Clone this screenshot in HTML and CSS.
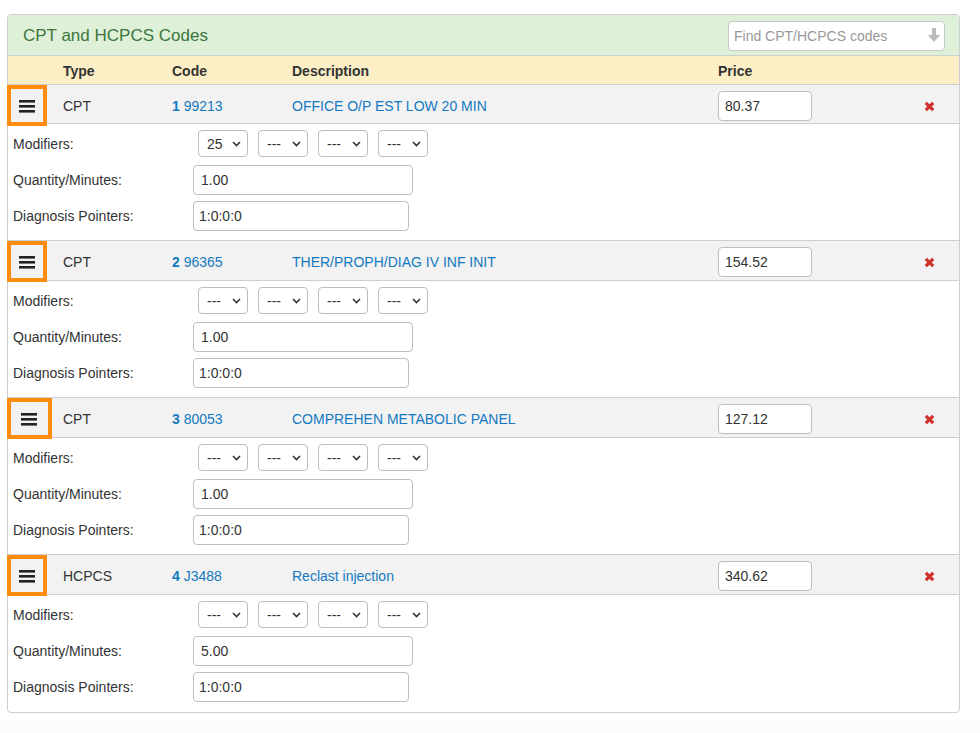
FILE: index.html
```html
<!DOCTYPE html>
<html lang="en">
<head>
<meta charset="utf-8">
<title>CPT and HCPCS Codes</title>
<link rel="stylesheet" href="styles.css">
</head>
<body>
<div class="panel">
  <div class="panel-head">
    <h3 class="panel-title">CPT and HCPCS Codes</h3>
    <div class="search">
      <input class="search-input" type="text" placeholder="Find CPT/HCPCS codes">
      <svg class="search-icon" width="12" height="15" viewBox="0 0 12 15"><rect x="4" y="0" width="4" height="8" fill="#bbb"/><polygon points="0,7 12,7 6,14" fill="#bbb"/></svg>
    </div>
  </div>
  <div class="grid cols">
    <span></span><span>Type</span><span>Code</span><span>Description</span><span>Price</span><span></span>
  </div>

  <div class="item">
    <div class="grid band">
      <div class="handle"><svg width="16" height="14" viewBox="0 0 16 14"><rect x="0" y="1" width="16" height="2.6" fill="#222"/><rect x="0" y="6" width="16" height="2.6" fill="#222"/><rect x="0" y="11" width="16" height="2.6" fill="#222"/></svg></div>
      <span>CPT</span>
      <a class="link" href="#"><b>1</b> 99213</a>
      <a class="link" href="#">OFFICE O/P EST LOW 20 MIN</a>
      <div><input class="price" type="text" value="80.37"></div>
      <div class="del"><svg width="11" height="11" viewBox="0 0 11 11"><path d="M1.8 1.8L9.2 9.2M9.2 1.8L1.8 9.2" stroke="#d0312d" stroke-width="3.2"/></svg></div>
    </div>
    <div class="details">
      <div class="field mods"><label>Modifiers:</label>
        <div class="selects">
          <span class="sel"><select><option>25</option></select><svg class="chev" width="9" height="6" viewBox="0 0 9 6"><path d="M1 1L4.5 4.5L8 1" fill="none" stroke="#333" stroke-width="1.6"/></svg></span>
          <span class="sel"><select><option>---</option></select><svg class="chev" width="9" height="6" viewBox="0 0 9 6"><path d="M1 1L4.5 4.5L8 1" fill="none" stroke="#333" stroke-width="1.6"/></svg></span>
          <span class="sel"><select><option>---</option></select><svg class="chev" width="9" height="6" viewBox="0 0 9 6"><path d="M1 1L4.5 4.5L8 1" fill="none" stroke="#333" stroke-width="1.6"/></svg></span>
          <span class="sel"><select><option>---</option></select><svg class="chev" width="9" height="6" viewBox="0 0 9 6"><path d="M1 1L4.5 4.5L8 1" fill="none" stroke="#333" stroke-width="1.6"/></svg></span>
        </div>
      </div>
      <div class="field qty"><label>Quantity/Minutes:</label><input class="qty-input" type="text" value="1.00"></div>
      <div class="field"><label>Diagnosis Pointers:</label><input class="diag-input" type="text" value="1:0:0:0"></div>
    </div>
  </div>

  <div class="item">
    <div class="grid band">
      <div class="handle"><svg width="16" height="14" viewBox="0 0 16 14"><rect x="0" y="1" width="16" height="2.6" fill="#222"/><rect x="0" y="6" width="16" height="2.6" fill="#222"/><rect x="0" y="11" width="16" height="2.6" fill="#222"/></svg></div>
      <span>CPT</span>
      <a class="link" href="#"><b>2</b> 96365</a>
      <a class="link" href="#">THER/PROPH/DIAG IV INF INIT</a>
      <div><input class="price" type="text" value="154.52"></div>
      <div class="del"><svg width="11" height="11" viewBox="0 0 11 11"><path d="M1.8 1.8L9.2 9.2M9.2 1.8L1.8 9.2" stroke="#d0312d" stroke-width="3.2"/></svg></div>
    </div>
    <div class="details">
      <div class="field mods"><label>Modifiers:</label>
        <div class="selects">
          <span class="sel"><select><option>---</option></select><svg class="chev" width="9" height="6" viewBox="0 0 9 6"><path d="M1 1L4.5 4.5L8 1" fill="none" stroke="#333" stroke-width="1.6"/></svg></span>
          <span class="sel"><select><option>---</option></select><svg class="chev" width="9" height="6" viewBox="0 0 9 6"><path d="M1 1L4.5 4.5L8 1" fill="none" stroke="#333" stroke-width="1.6"/></svg></span>
          <span class="sel"><select><option>---</option></select><svg class="chev" width="9" height="6" viewBox="0 0 9 6"><path d="M1 1L4.5 4.5L8 1" fill="none" stroke="#333" stroke-width="1.6"/></svg></span>
          <span class="sel"><select><option>---</option></select><svg class="chev" width="9" height="6" viewBox="0 0 9 6"><path d="M1 1L4.5 4.5L8 1" fill="none" stroke="#333" stroke-width="1.6"/></svg></span>
        </div>
      </div>
      <div class="field qty"><label>Quantity/Minutes:</label><input class="qty-input" type="text" value="1.00"></div>
      <div class="field"><label>Diagnosis Pointers:</label><input class="diag-input" type="text" value="1:0:0:0"></div>
    </div>
  </div>

  <div class="item">
    <div class="grid band">
      <div class="handle handle-wide"><svg width="16" height="14" viewBox="0 0 16 14"><rect x="0" y="1" width="16" height="2.6" fill="#222"/><rect x="0" y="6" width="16" height="2.6" fill="#222"/><rect x="0" y="11" width="16" height="2.6" fill="#222"/></svg></div>
      <span>CPT</span>
      <a class="link" href="#"><b>3</b> 80053</a>
      <a class="link" href="#">COMPREHEN METABOLIC PANEL</a>
      <div><input class="price" type="text" value="127.12"></div>
      <div class="del"><svg width="11" height="11" viewBox="0 0 11 11"><path d="M1.8 1.8L9.2 9.2M9.2 1.8L1.8 9.2" stroke="#d0312d" stroke-width="3.2"/></svg></div>
    </div>
    <div class="details">
      <div class="field mods"><label>Modifiers:</label>
        <div class="selects">
          <span class="sel"><select><option>---</option></select><svg class="chev" width="9" height="6" viewBox="0 0 9 6"><path d="M1 1L4.5 4.5L8 1" fill="none" stroke="#333" stroke-width="1.6"/></svg></span>
          <span class="sel"><select><option>---</option></select><svg class="chev" width="9" height="6" viewBox="0 0 9 6"><path d="M1 1L4.5 4.5L8 1" fill="none" stroke="#333" stroke-width="1.6"/></svg></span>
          <span class="sel"><select><option>---</option></select><svg class="chev" width="9" height="6" viewBox="0 0 9 6"><path d="M1 1L4.5 4.5L8 1" fill="none" stroke="#333" stroke-width="1.6"/></svg></span>
          <span class="sel"><select><option>---</option></select><svg class="chev" width="9" height="6" viewBox="0 0 9 6"><path d="M1 1L4.5 4.5L8 1" fill="none" stroke="#333" stroke-width="1.6"/></svg></span>
        </div>
      </div>
      <div class="field qty"><label>Quantity/Minutes:</label><input class="qty-input" type="text" value="1.00"></div>
      <div class="field"><label>Diagnosis Pointers:</label><input class="diag-input" type="text" value="1:0:0:0"></div>
    </div>
  </div>

  <div class="item">
    <div class="grid band">
      <div class="handle"><svg width="16" height="14" viewBox="0 0 16 14"><rect x="0" y="1" width="16" height="2.6" fill="#222"/><rect x="0" y="6" width="16" height="2.6" fill="#222"/><rect x="0" y="11" width="16" height="2.6" fill="#222"/></svg></div>
      <span>HCPCS</span>
      <a class="link" href="#"><b>4</b> J3488</a>
      <a class="link" href="#">Reclast injection</a>
      <div><input class="price" type="text" value="340.62"></div>
      <div class="del"><svg width="11" height="11" viewBox="0 0 11 11"><path d="M1.8 1.8L9.2 9.2M9.2 1.8L1.8 9.2" stroke="#d0312d" stroke-width="3.2"/></svg></div>
    </div>
    <div class="details">
      <div class="field mods"><label>Modifiers:</label>
        <div class="selects">
          <span class="sel"><select><option>---</option></select><svg class="chev" width="9" height="6" viewBox="0 0 9 6"><path d="M1 1L4.5 4.5L8 1" fill="none" stroke="#333" stroke-width="1.6"/></svg></span>
          <span class="sel"><select><option>---</option></select><svg class="chev" width="9" height="6" viewBox="0 0 9 6"><path d="M1 1L4.5 4.5L8 1" fill="none" stroke="#333" stroke-width="1.6"/></svg></span>
          <span class="sel"><select><option>---</option></select><svg class="chev" width="9" height="6" viewBox="0 0 9 6"><path d="M1 1L4.5 4.5L8 1" fill="none" stroke="#333" stroke-width="1.6"/></svg></span>
          <span class="sel"><select><option>---</option></select><svg class="chev" width="9" height="6" viewBox="0 0 9 6"><path d="M1 1L4.5 4.5L8 1" fill="none" stroke="#333" stroke-width="1.6"/></svg></span>
        </div>
      </div>
      <div class="field qty"><label>Quantity/Minutes:</label><input class="qty-input" type="text" value="5.00"></div>
      <div class="field"><label>Diagnosis Pointers:</label><input class="diag-input" type="text" value="1:0:0:0"></div>
    </div>
  </div>
</div>
<div class="page-foot"></div>
</body>
</html>
```

FILE: styles.css
```css
* { box-sizing: border-box; }
html, body { margin: 0; padding: 0; background: #fff; }
body {
  padding-top: 14px;
  font-family: "Liberation Sans", Arial, sans-serif;
  font-size: 14px;
  color: #333;
}
.panel {
  width: 953px;
  margin-left: 7px;
  padding-bottom: 1px;
  border: 1px solid #cfcfcf;
  border-radius: 4px;
  background: #fff;
}
.panel-head {
  height: 41px;
  display: flex;
  align-items: center;
  justify-content: space-between;
  padding: 2px 14px 0 15px;
  background: #dff0d8;
  border-bottom: 1px solid #cfcfcf;
  border-radius: 3px 3px 0 0;
}
.panel-title {
  margin: 0;
  font-size: 17px;
  font-weight: normal;
  color: #3c763d;
}
.search {
  position: relative;
  width: 217px;
  height: 30px;
}
.search-input {
  width: 100%;
  height: 100%;
  border: 1px solid #c8c8c8;
  border-radius: 4px;
  padding: 0 26px 0 5px;
  font-family: inherit;
  font-size: 14px;
  color: #555;
  background: #fff;
}
.search-input::placeholder { color: #999; }
.search-icon {
  position: absolute;
  right: 5px;
  top: 7px;
}
.grid {
  display: grid;
  grid-template-columns: 55px 109px 120px 426px 180px 1fr;
  align-items: center;
}
.cols {
  height: 29px;
  background: #fdefc5;
  border-bottom: 1px solid #cfcfcf;
  font-weight: bold;
  padding-top: 1px;
}
.band {
  height: 39px;
  background: #f2f2f2;
  border-bottom: 1px solid #cfcfcf;
}
.item + .item .band {
  height: 41px;
  border-top: 1px solid #cfcfcf;
}
.handle {
  width: 40px;
  height: 41px;
  margin-left: -1px;
  border: 4px solid #ff8c0f;
  background: #f2f2f2;
  display: flex;
  align-items: center;
  justify-content: center;
  padding-right: 1px;
}
.handle-wide { width: 45px; }
.link {
  color: #1479c1;
  text-decoration: none;
}
.link b { font-weight: bold; }
.price {
  width: 94px;
  height: 30px;
  border: 1px solid #bdbdbd;
  border-radius: 4px;
  padding: 0 6px;
  font-family: inherit;
  font-size: 14px;
  color: #333;
  background: #fff;
  display: block;
}
.del {
  display: flex;
  justify-content: center;
  padding-left: 1px;
  padding-top: 1px;
}
.details {
  padding: 6px 0 9px 5px;
}
.field {
  display: grid;
  grid-template-columns: 180px auto;
  align-items: center;
  height: 30px;
}
.field label { display: block; }
.mods { height: 27px; margin-bottom: 8px; }
.qty { margin-bottom: 6px; }
.selects {
  display: flex;
  gap: 10px;
  padding-left: 5px;
}
.sel {
  position: relative;
  display: block;
  width: 50px;
  height: 27px;
}
.sel select {
  appearance: none;
  -webkit-appearance: none;
  width: 100%;
  height: 100%;
  border: 1px solid #bdbdbd;
  border-radius: 4px;
  background: #fff;
  font-family: inherit;
  font-size: 14px;
  color: #333;
  padding: 0 0 0 8px;
}
.sel .chev {
  position: absolute;
  right: 7px;
  top: 11px;
  pointer-events: none;
}
.qty-input, .diag-input {
  height: 30px;
  border: 1px solid #bdbdbd;
  border-radius: 4px;
  padding: 0 7px;
  font-family: inherit;
  font-size: 14px;
  color: #333;
  background: #fff;
}
.qty-input { width: 220px; }
.diag-input { width: 216px; padding-left: 5px; }
.page-foot {
  margin-top: 8px;
  height: 40px;
  background: #fbfbfb;
}
```
